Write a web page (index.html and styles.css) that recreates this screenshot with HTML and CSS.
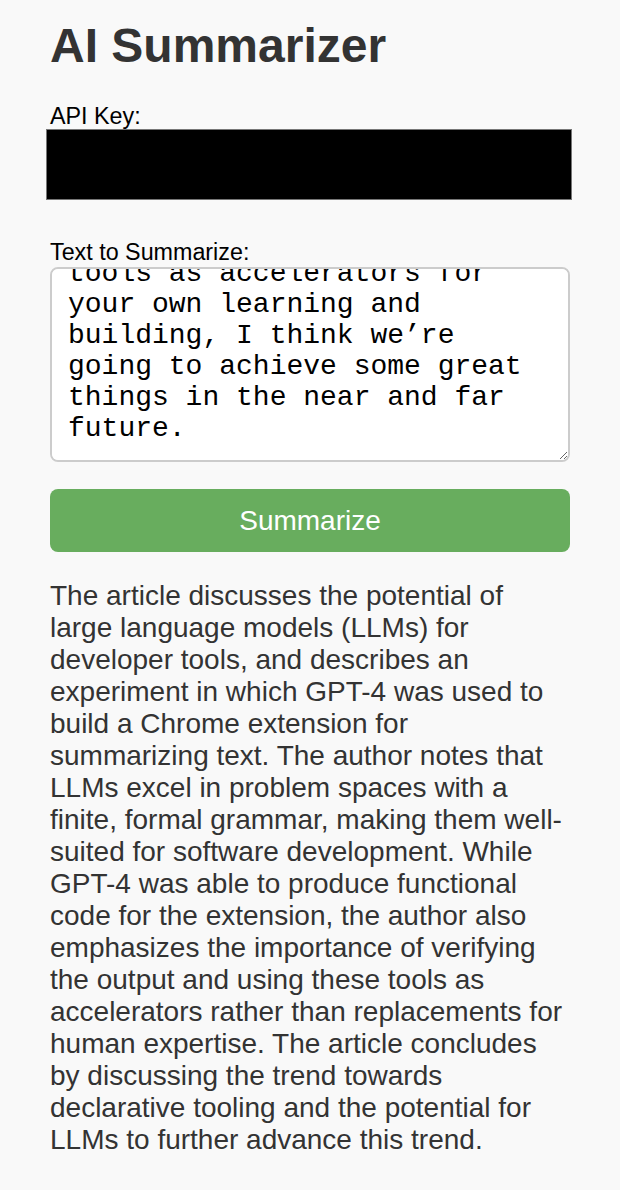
FILE: index.html
```html
<!DOCTYPE html>
<html lang="en">
<head>
<meta charset="utf-8">
<title>AI Summarizer</title>
<link rel="stylesheet" href="styles.css">
</head>
<body>
<main class="app">
  <h1 class="title">AI Summarizer</h1>
  <label class="field-label" for="api-key">API Key:</label>
  <input class="api-key" id="api-key" type="password" value="">
  <label class="field-label label-text" for="text">Text to Summarize:</label>
  <textarea class="source-text" id="text">Large language models are changing the way developers build software. In this post I walked through an experiment using GPT-4 to write a Chrome extension that summarizes any text you paste into it.

The results were impressive, but they still needed careful review and verification.

If you start using these tools as accelerators for your own learning and building, I think we’re going to achieve some great things in the near and far future.</textarea>
  <button class="summarize-btn" type="button">Summarize</button>
  <p class="summary">The article discusses the potential of large language models (LLMs) for developer tools, and describes an experiment in which GPT-4 was used to build a Chrome extension for summarizing text. The author notes that LLMs excel in problem spaces with a finite, formal grammar, making them well-suited for software development. While GPT-4 was able to produce functional code for the extension, the author also emphasizes the importance of verifying the output and using these tools as accelerators rather than replacements for human expertise. The article concludes by discussing the trend towards declarative tooling and the potential for LLMs to further advance this trend.</p>
</main>
<script src="script.js"></script>
</body>
</html>
```

FILE: styles.css
```css
html, body {
  margin: 0;
  padding: 0;
  background: #f9f9f9;
}

body {
  font-family: "Liberation Sans", Arial, Helvetica, sans-serif;
  color: #333;
}

.app {
  width: 520px;
  padding: 18px 50px 20px;
  display: flex;
  flex-direction: column;
}

.title {
  margin: 0;
  font-size: 48px;
  font-weight: 700;
  line-height: 55px;
  color: #333;
}

.field-label {
  display: block;
  margin-top: 31px;
  font-size: 23.3px;
  line-height: 25px;
  color: #000;
}

.label-text {
  margin-top: 40px;
}

.api-key {
  box-sizing: border-box;
  width: 526px;
  height: 71px;
  margin: 0 0 0 -4px;
  background: #000;
  border: 1px solid #777;
  border-radius: 0;
  padding: 0;
  outline: none;
}

.source-text {
  box-sizing: border-box;
  width: 520px;
  height: 195px;
  margin: 2px 0 0;
  padding: 16px;
  border: 2px solid #cccccc;
  border-radius: 8px;
  background: #fff;
  color: #000;
  font-family: "Liberation Mono", "Courier New", monospace;
  font-size: 28px;
  line-height: normal;
  resize: vertical;
  overflow-y: auto;
  scrollbar-width: none;
}

.source-text::-webkit-scrollbar {
  display: none;
}

.summarize-btn {
  margin-top: 27px;
  height: 63px;
  width: 520px;
  border: none;
  border-radius: 8px;
  background: #68ad5e;
  color: #fff;
  font-family: "Liberation Sans", Arial, Helvetica, sans-serif;
  font-size: 28px;
  cursor: pointer;
}

.summary {
  margin: 28px 0 0;
  font-size: 28px;
  line-height: normal;
  color: #333;
}
```

FILE: script.js
```js
const ta = document.getElementById('text');
ta.scrollTop = ta.scrollHeight;
```
